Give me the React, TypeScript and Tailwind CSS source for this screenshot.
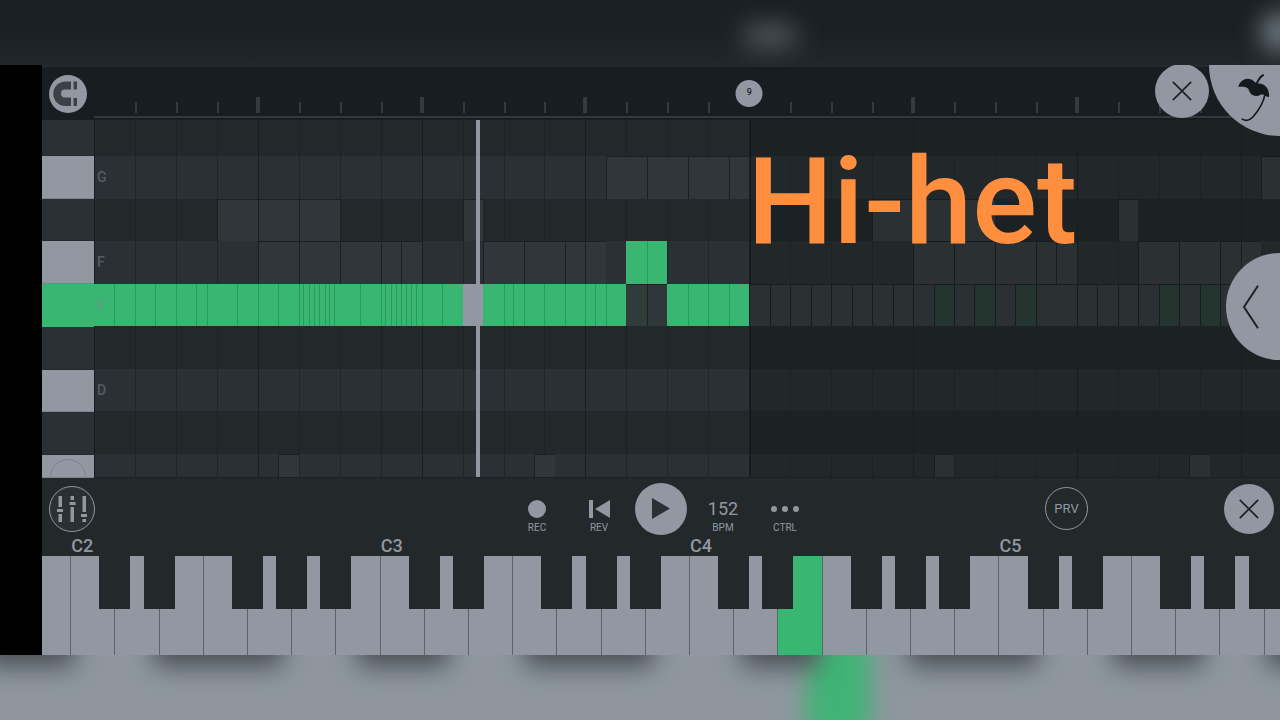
import React, { useState } from "react";

type NoteKind = "active" | "playing" | "ghost" | "faded" | "tinted" | "mixed";

interface Note {
  start: number;
  end: number;
  kind: NoteKind;
}

interface Lane {
  name: string;
  label?: string;
  natural: boolean;
  pressed?: boolean;
  height: string;
  notes: Note[];
  cuts?: number[];
}

// beats that fit in the visible part of the roll
const BEATS = 28.96;
const PATTERN_END = 16;
const PLAYHEAD = 9.33;

const pct = (beat: number) => `${(beat / BEATS) * 100}%`;

// turns a list of edges into back-to-back notes
const run = (kind: NoteKind, ...edges: number[]): Note[] =>
  edges.slice(1).map((end, i) => ({ start: edges[i], end, kind }));

const noteColors: Record<NoteKind, string> = {
  active: "bg-[#38b672]",
  playing: "bg-[#9297a2]",
  ghost: "bg-[#30373a] border-l border-t border-[#1a2023]",
  faded: "bg-[#2b3033] border-l border-t border-[#161c1f]",
  tinted: "bg-[#24342f] border-l border-t border-[#161c1f]",
  mixed: "bg-[#2f3c39] border-t border-[#1a2023]",
};

const lanes: Lane[] = [
  { name: "G sharp", natural: false, height: "h-9", notes: [] },
  {
    name: "G",
    label: "G",
    natural: true,
    height: "flex-1",
    notes: [
      ...run("ghost", 12.5, 13.5, 14.5, 15.5, 16),
      ...run("faded", 28.5, BEATS),
    ],
  },
  {
    name: "F sharp",
    natural: false,
    height: "flex-1",
    notes: [
      ...run("ghost", 3, 4, 5, 6),
      ...run("ghost", 9, 9.5),
      ...run("faded", 19, 20, 21, 22),
      ...run("faded", 25, 25.5),
    ],
  },
  {
    name: "F",
    label: "F",
    natural: true,
    height: "flex-1",
    notes: [
      ...run("ghost", 4, 5, 6, 7, 7.5, 8),
      ...run("ghost", 9.5, 10.5, 11.5, 12, 12.5),
      ...run("active", 13, 14),
      ...run("faded", 20, 21, 22, 23, 23.5, 24),
      ...run("faded", 25.5, 26.5, 27.5, 28, 28.5),
    ],
    cuts: [13.5],
  },
  {
    name: "E",
    label: "E",
    natural: true,
    pressed: true,
    height: "flex-1",
    notes: [
      ...run("active", 0, 9),
      ...run("playing", 9, 9.5),
      ...run("active", 9.5, 13),
      ...run("mixed", 13, 13.5),
      ...run("ghost", 13.5, 14),
      ...run("active", 14, 16),
      ...run("faded", 16, 16.5, 17, 17.5, 18, 18.5, 19, 19.5, 20, 20.5),
      ...run("tinted", 20.5, 21),
      ...run("faded", 21, 21.5),
      ...run("tinted", 21.5, 22),
      ...run("faded", 22, 22.5),
      ...run("tinted", 22.5, 23),
      ...run("faded", 23, 24, 24.5, 25, 25.5, 26),
      ...run("tinted", 26, 26.5),
      ...run("faded", 26.5, 27),
      ...run("tinted", 27, 27.5),
      ...run("faded", 27.5, 28, 28.5, BEATS),
    ],
    cuts: [
      0.5, 1, 1.5, 2, 2.5, 2.75, 3.5, 4, 4.5, 5, 5.11, 5.24, 5.37, 5.5, 5.63,
      5.75, 5.87, 6.5, 7, 7.11, 7.24, 7.37, 7.5, 7.63, 7.75, 7.87, 8, 8.5, 10,
      10.23, 10.5, 11, 11.5, 12, 12.23, 12.5, 14.5, 15, 15.5,
    ],
  },
  { name: "D sharp", natural: false, height: "flex-1", notes: [] },
  { name: "D", label: "D", natural: true, height: "flex-1", notes: [] },
  { name: "C sharp", natural: false, height: "flex-1", notes: [] },
  {
    name: "C",
    natural: true,
    height: "h-[23px]",
    notes: [
      ...run("ghost", 4.5, 5),
      ...run("ghost", 10.75, 11.25),
      ...run("faded", 20.5, 21),
      ...run("faded", 26.75, 27.25),
    ],
  },
];

const beats = Array.from({ length: 28 }, (_, i) => i + 1);

// B1 up to B5, white keys only
const whiteKeys = Array.from({ length: 29 }, (_, i) => {
  const letter = "BCDEFGA"[i % 7];
  const octave = letter === "B" ? Math.floor(i / 7) + 1 : Math.floor(i / 7) + 2;
  return { letter, octave, sharp: "CDFGA".includes(letter) };
});

const MagnetIcon = () => (
  <svg viewBox="0 0 38 38" className="h-full w-full" fill="#3b4246">
    <path d="M22 6.500V14.500H16A4 4 0 0 0 16 22.500H22V31H16.500A12.250 12.250 0 0 1 16.500 6.500Z" />
    <path d="M24.500 6.500H28V14.500H24.500ZM24.500 23H28V31H24.500Z" />
  </svg>
);

const CrossIcon = () => (
  <svg viewBox="0 0 20 20" className="h-5 w-5" stroke="#1c2326" strokeWidth="1.7">
    <path d="M.8.8 19.2 19.2M19.2.8.8 19.2" />
  </svg>
);

const UmbrellaIcon = () => (
  <svg viewBox="290 40 100 150" className="h-[50px] w-[33px]" fill="none" stroke="#14191c">
    <path
      fill="#14191c"
      stroke="none"
      d="M294 81C297 69 308 57 322 57C332 57 339 61 344 67C352 71 361 70 369 74C382 80 389 95 387 113L378 110C372 105 366 103 360 106C350 112 334 109 328 96C325 91 326 87 323 86C316 80 305 81 294 81Z"
    />
    <path strokeWidth="6" strokeLinecap="round" d="M369 46C361 48 356 58 350 70" />
    <path
      strokeWidth="5"
      strokeLinecap="round"
      d="M374 107C369 133 356 151 342 168C330 183 318 186 306 179"
    />
  </svg>
);

const MixerIcon = () => (
  <svg viewBox="0 0 30 28" className="h-7 w-[30px]" fill="#9298a1">
    <path d="M1.500 1h3.500v11H1.500zM0 14h6v3H0zM1.500 19h3.500v8H1.500z" />
    <path d="M13.500 1h3.500v4h-3.500zM12.500 7h6v3h-6zM13.500 12h3.500v15h-3.500z" />
    <path d="M25.500 1h3.500v16h-3.500zM24 19h6v3h-6zM25.500 24h3.500v3h-3.500z" />
  </svg>
);

interface TransportProps {
  label: string;
  children: React.ReactNode;
}

const TransportButton: React.FC<TransportProps> = ({ label, children }) => (
  <button className="flex h-full w-[62px] flex-col items-center pt-4">
    <span className="flex h-[21px] items-center">{children}</span>
    <span className="mt-[3px] text-[10px] leading-3">{label}</span>
  </button>
);

const Ruler = () => (
  <div className="flex h-[55px] border-t-2 border-[#23292c] bg-[#171d20]">
    <div className="flex w-[52px] items-center justify-center">
      <button aria-label="Snap" className="h-[38px] w-[38px] rounded-full bg-[#9298a1]">
        <MagnetIcon />
      </button>
    </div>
    <div className="relative mb-0.5 flex-1 border-b-2 border-[#31373a]">
      {beats
        .filter((beat) => beat !== PATTERN_END)
        .map((beat) => (
          <span
            key={beat}
            className={
              beat % 4 === 0
                ? "absolute bottom-[3px] h-4 w-1 -translate-x-1/2 bg-[#343b3e]"
                : "absolute bottom-[3px] h-[11px] w-0.5 bg-[#343b3e]"
            }
            style={{ left: pct(beat) }}
          />
        ))}
      <span
        className="absolute top-[13px] flex h-[27px] w-[27px] -translate-x-1/2 items-center justify-center rounded-full bg-[#9298a1] pb-0.5 text-[9px] font-medium text-[#1c2326]"
        style={{ left: pct(PATTERN_END) }}
      >
        9
      </span>
    </div>
  </div>
);

const PianoRoll = () => (
  <div className="flex h-[358px]">
    <div className="flex w-[52px] flex-col">
      {lanes.map((lane, i) => (
        <button
          key={lane.name}
          aria-label={lane.name}
          className={`relative overflow-hidden border-b ${lane.height} ${
            lane.pressed
              ? "border-[#38b672] bg-[#38b672]"
              : lane.natural
                ? "border-[#7d848c] bg-[#9298a1]"
                : "border-[#23292c] bg-[#2a3034]"
          }`}
        >
          {i === lanes.length - 1 && (
            <span className="absolute left-2 top-1 h-9 w-9 rounded-full border border-[#7d838b]" />
          )}
        </button>
      ))}
    </div>
    <div className="relative flex flex-1 flex-col overflow-hidden border-b border-[#1a2023]">
      {lanes.map((lane) => (
        <div
          key={lane.name}
          className={`relative ${lane.height} ${lane.natural ? "bg-[#2a3034]" : "bg-[#23292b]"}`}
        >
          <div className="absolute inset-0 z-10">
            {lane.notes.map((note) => (
              <span
                key={note.start}
                className={`absolute inset-y-0 ${noteColors[note.kind]}`}
                style={{ left: pct(note.start), width: pct(note.end - note.start) }}
              />
            ))}
            {lane.cuts?.map((cut) => (
              <span
                key={cut}
                className="absolute inset-y-0 w-px bg-[#2b9a60]"
                style={{ left: pct(cut) }}
              />
            ))}
            {lane.label && (
              <span
                className={`absolute inset-y-0 left-[3px] flex items-center text-sm font-medium ${
                  lane.pressed ? "text-[#55a37b]" : "text-[#565c60]"
                }`}
              >
                {lane.label}
              </span>
            )}
          </div>
        </div>
      ))}
      <div
        className="absolute inset-y-0 right-0 border-l-2 border-black/30 bg-black/18"
        style={{ left: pct(PATTERN_END) }}
      />
      {[0, ...beats].map((beat) => (
        <span
          key={beat}
          className={`absolute inset-y-0 w-px ${beat % 4 === 0 ? "bg-[#171d20]" : "bg-[#1b2124]/70"}`}
          style={{ left: pct(beat) }}
        />
      ))}
      <span
        className="absolute inset-y-0 z-20 w-1 bg-[#9298a1]"
        style={{ left: pct(PLAYHEAD) }}
      />
      <p
        className="absolute top-[22px] z-20 -ml-0.5 text-[121px] font-medium leading-none text-[#ff8f3f]"
        style={{ left: pct(PATTERN_END) }}
      >
        Hi-het
      </p>
    </div>
  </div>
);

const Toolbar: React.FC<{ playing: boolean; onPlay: () => void }> = ({ playing, onPlay }) => (
  <div className="grid h-[57px] grid-cols-[1fr_auto_1fr] items-center pt-1 text-[#9298a1]">
    <div className="pl-[7px]">
      <button
        aria-label="Mixer"
        className="flex h-[46px] w-[46px] items-center justify-center rounded-full border border-[#9298a1] bg-[#2a3034]"
      >
        <MixerIcon />
      </button>
    </div>
    <div className="flex h-full items-center">
      <TransportButton label="REC">
        <span className="h-[18px] w-[18px] rounded-full bg-[#9298a1]" />
      </TransportButton>
      <TransportButton label="REV">
        <svg viewBox="0 0 21 18" className="h-[18px] w-[21px]" fill="currentColor">
          <path d="M0 0h4v18H0zM21 0v18L6 9z" />
        </svg>
      </TransportButton>
      <button
        aria-label="Play"
        aria-pressed={playing}
        onClick={onPlay}
        className="mx-[5px] flex h-[52px] w-[52px] items-center justify-center rounded-full bg-[#9298a1]"
      >
        <svg viewBox="0 0 18 21" className="h-[21px] w-[18px]" fill="#2a3135">
          <path d="M0 0 18 10.500 0 21z" />
        </svg>
      </button>
      <TransportButton label="BPM">
        <span className="text-lg leading-[18px]">152</span>
      </TransportButton>
      <TransportButton label="CTRL">
        <span className="flex gap-[5px]">
          <span className="h-1.5 w-1.5 rounded-full bg-[#9298a1]" />
          <span className="h-1.5 w-1.5 rounded-full bg-[#9298a1]" />
          <span className="h-1.5 w-1.5 rounded-full bg-[#9298a1]" />
        </span>
      </TransportButton>
    </div>
    <div className="flex items-center justify-end gap-[136px] pr-1.5">
      <button className="h-[43px] w-[43px] rounded-full border border-[#9298a1] text-[13px]">
        PRV
      </button>
      <button
        aria-label="Close keyboard"
        className="flex h-[50px] w-[50px] items-center justify-center rounded-full bg-[#9298a1]"
      >
        <CrossIcon />
      </button>
    </div>
  </div>
);

const Keyboard = () => (
  <div className="overflow-hidden">
    <div className="-ml-4 flex w-[calc(100%+44px)]">
      {whiteKeys.map(({ letter, octave, sharp }) => (
        <div key={letter + octave} className="relative min-w-0 flex-1">
          <div className="h-[21px] pl-px text-lg font-medium leading-[21px] text-[#9298a1]">
            {letter === "C" && `C${octave}`}
          </div>
          <button
            aria-label={`${letter}${octave}`}
            className={`block h-[99px] w-full border-l border-[#5d646b] ${
              letter === "E" && octave === 4 ? "bg-[#38b672]" : "bg-[#9298a1]"
            }`}
          />
          {sharp && (
            <button
              aria-label={`${letter} sharp ${octave}`}
              className="absolute -right-4 top-[21px] z-10 h-[53px] w-[31px] bg-[#23292b]"
            />
          )}
        </div>
      ))}
    </div>
  </div>
);

const App: React.FC = () => {
  const [playing, setPlaying] = useState(false);

  return (
    <div className="flex min-h-screen flex-col overflow-hidden bg-[#1a2023] font-[Roboto,sans-serif]">
      <div className="relative h-[65px] overflow-hidden bg-linear-to-b from-[#1a2023] from-50% to-[#21272a]">
        <span className="absolute left-[58%] top-6 h-6 w-14 rounded-full bg-[#4f565a] blur-md" />
        <span className="absolute -right-5 top-3 h-10 w-10 rounded-full bg-[#707880] blur-md" />
      </div>

      <div className="flex">
        <div className="w-[42px] bg-black" />
        <main className="relative min-w-0 flex-1 overflow-hidden bg-[#23292b]">
          <Ruler />
          <PianoRoll />
          <Toolbar playing={playing} onPlay={() => setPlaying(!playing)} />
          <Keyboard />
          <button
            aria-label="Close editor"
            className="absolute -top-px right-[71px] z-30 flex h-[54px] w-[54px] items-center justify-center rounded-full bg-[#9298a1]"
          >
            <CrossIcon />
          </button>
          <button
            aria-label="Menu"
            className="absolute right-0 top-0 z-30 flex h-[71px] w-[71px] items-start rounded-bl-full bg-[#9298a1] pl-7 pt-2"
          >
            <UmbrellaIcon />
          </button>
          <button
            aria-label="Open panel"
            className="absolute right-0 top-[188px] z-30 flex h-[107px] w-[54px] items-center rounded-l-full bg-[#9298a1] pl-4"
          >
            <svg
              viewBox="0 0 18 44"
              className="h-11 w-[18px]"
              fill="none"
              stroke="#1c2326"
              strokeWidth="2"
            >
              <path d="M16 .8 2 22 16 43.200" />
            </svg>
          </button>
        </main>
      </div>

      <div className="relative flex-1 overflow-hidden bg-[#8f969e]">
        <span className="absolute -top-6 -left-4 h-9 w-[7%] bg-[#4a5156] blur-md" />
        <span className="absolute -top-6 left-[12%] h-9 w-[10%] bg-[#4a5156] blur-md" />
        <span className="absolute -top-6 left-[28%] h-9 w-[7%] bg-[#4a5156] blur-md" />
        <span className="absolute -top-6 left-[41%] h-9 w-[10%] bg-[#4a5156] blur-md" />
        <span className="absolute -inset-y-5 left-[63%] w-[5%] bg-[#3fb375] blur-md" />
        <span className="absolute -top-6 left-[58%] h-9 w-[6%] bg-[#4a5156] blur-md" />
        <span className="absolute -top-6 left-[71%] h-9 w-[10%] bg-[#4a5156] blur-md" />
        <span className="absolute -top-6 left-[87%] h-9 w-[7%] bg-[#4a5156] blur-md" />
        <span className="absolute -top-6 left-[99%] h-9 w-[5%] bg-[#4a5156] blur-md" />
      </div>
    </div>
  );
};

export default App;
